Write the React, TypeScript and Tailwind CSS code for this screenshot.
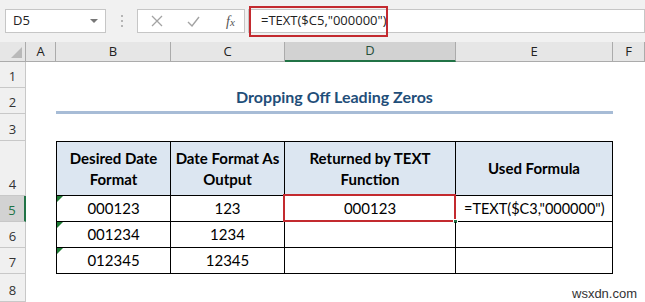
import React from "react";

const colLetters = ["A", "B", "C", "D", "E", "F"];
const rowNums = [1, 2, 3, 4, 5, 6, 7, 8];

const data = [
  { b: "000123", c: "123", d: "000123", e: '=TEXT($C3,"000000")' },
  { b: "001234", c: "1234", d: "", e: "" },
  { b: "012345", c: "12345", d: "", e: "" },
];

const ErrorMark = () => (
  <div className="absolute left-0 top-0 w-0 h-0 border-t-[6px] border-r-[6px] border-t-[#1e7b34] border-r-transparent"></div>
);

const App = () => {
  return (
    <div className="w-[645px] h-[302px] overflow-hidden bg-white relative font-['Lato',sans-serif] text-black">
      {/* formula bar */}
      <div className="h-[42px] bg-[#f1f1f1] flex items-center pl-[5px] font-['Open_Sans',sans-serif]">
        <div className="w-[101px] h-[24px] bg-white border border-[#c6c6c6] flex items-center justify-between pl-[7px] pr-[7px] text-[13px] text-[#222]">
          <span>D5</span>
          <div className="w-0 h-0 border-l-[4px] border-r-[4px] border-t-[4px] border-l-transparent border-r-transparent border-t-[#777]"></div>
        </div>
        <div className="w-[31px] flex flex-col items-center gap-[3px]">
          <div className="w-[2px] h-[2px] bg-[#b5b5b5]"></div>
          <div className="w-[2px] h-[2px] bg-[#b5b5b5]"></div>
          <div className="w-[2px] h-[2px] bg-[#b5b5b5]"></div>
        </div>
        <div className="w-[108px] h-[24px] bg-white border border-[#c6c6c6] flex items-center pl-[12px]">
          <svg width="12" height="12" viewBox="0 0 12 12" className="ml-[1px]">
            <path d="M1 1 L11 11 M11 1 L1 11" stroke="#a3a3a3" strokeWidth="1.3" />
          </svg>
          <svg width="13" height="11" viewBox="0 0 13 11" className="ml-[24px]">
            <path d="M1 6 L5 10 L12 1" stroke="#a3a3a3" strokeWidth="1.4" fill="none" />
          </svg>
          <span className="ml-[26px] font-['Liberation_Serif',serif] italic text-[14px] text-[#555]">
            f<span className="text-[11px]">x</span>
          </span>
        </div>
        <div className="flex-1 h-[24px] bg-white border border-[#c6c6c6] ml-[3px] flex items-center pl-[12px] text-[13px] text-[#222] relative">
          <span>=TEXT($C5,"000000")</span>
          <div className="absolute left-[0px] top-[-4px] w-[139px] h-[31px] border-[2px] border-[#c32a2f]"></div>
        </div>
      </div>

      {/* sheet */}
      <div className="grid grid-cols-[26px_30px_115px_114px_171px_157px_1fr] grid-rows-[20px_26px_26px_27px_55px_26px_26px_26px_1fr] h-[260px]">
        {/* corner */}
        <div className="bg-[#e6e6e6] border-r border-b border-[#ababab] relative">
          <svg className="absolute right-[3px] bottom-[3px]" width="11" height="11" viewBox="0 0 11 11">
            <path d="M11 0 L11 11 L0 11 Z" fill="#b9b9b9" />
          </svg>
        </div>
        {colLetters.map((c) => (
          <div
            key={c}
            className={
              c === "D"
                ? "bg-[#d2d2d2] border-r border-[#ababab] border-b-2 border-b-[#217346] flex items-center justify-center text-[13px] font-['Open_Sans',sans-serif] text-[#26503a]"
                : "bg-[#e6e6e6] border-r border-b border-[#ababab] flex items-center justify-center text-[13px] font-['Open_Sans',sans-serif] text-[#222]"
            }
          >
            {c}
          </div>
        ))}

        {rowNums.map((r) => {
          const header = (
            <div
              key={"h" + r}
              className={
                r === 5
                  ? "bg-[#d2d2d2] border-r-2 border-r-[#217346] border-b border-[#c8c8c8] flex items-end justify-center pb-[1px] text-[13px] font-['Open_Sans',sans-serif] text-[#217346]"
                  : "bg-[#f0f0f0] border-r border-b border-[#c8c8c8] flex items-end justify-center pb-[1px] text-[13px] font-['Open_Sans',sans-serif] text-[#333]"
              }
            >
              {r}
            </div>
          );

          if (r === 2) {
            return (
              <React.Fragment key={r}>
                {header}
                <div></div>
                <div className="col-span-4 border-b-[3px] border-[#a7bcd6] flex items-end justify-center pb-[2px] text-[16px] font-bold text-[#1f4e79]">
                  Dropping Off Leading Zeros
                </div>
                <div></div>
              </React.Fragment>
            );
          }

          if (r === 4) {
            const heads = [
              ["Desired Date", "Format"],
              ["Date Format As", "Output"],
              ["Returned by TEXT", "Function"],
              ["Used Formula"],
            ];
            return (
              <React.Fragment key={r}>
                {header}
                <div></div>
                {heads.map((h, i) => (
                  <div
                    key={i}
                    className={
                      "bg-[#dce6f1] border-t border-r border-b border-black flex flex-col items-center justify-center text-[15px] font-bold leading-[21px] " +
                      (i === 0 ? "border-l" : "")
                    }
                  >
                    {h.map((line) => (
                      <span key={line}>{line}</span>
                    ))}
                  </div>
                ))}
                <div></div>
              </React.Fragment>
            );
          }

          if (r >= 5 && r <= 7) {
            const row = data[r - 5];
            return (
              <React.Fragment key={r}>
                {header}
                <div></div>
                <div className="relative border-l border-r border-b border-black flex items-center justify-center text-[15px]">
                  <ErrorMark />
                  {row.b}
                </div>
                <div className="border-r border-b border-black flex items-center justify-center text-[15px]">
                  {row.c}
                </div>
                <div className="relative border-r border-b border-black flex items-center justify-center text-[15px]">
                  {row.d}
                  {r === 5 && (
                    <>
                      <div className="absolute left-[-2px] top-[-2px] right-[-1px] bottom-[-1px] border-[2px] border-[#c32a2f]"></div>
                      <div className="absolute right-[-3px] bottom-[-3px] w-[5px] h-[5px] bg-[#217346] border border-white"></div>
                    </>
                  )}
                </div>
                <div className="border-r border-b border-black flex items-center pl-[8px] text-[14.5px]">
                  {row.e}
                </div>
                <div></div>
              </React.Fragment>
            );
          }

          return (
            <React.Fragment key={r}>
              {header}
              <div className="col-span-6"></div>
            </React.Fragment>
          );
        })}
        {/* filler row header */}
        <div className="bg-[#f0f0f0] border-r border-[#c8c8c8]"></div>
        <div className="col-span-6"></div>
      </div>

      <div className="absolute left-[572px] top-[284px] font-['Liberation_Sans',sans-serif] text-[13px] text-[#333]">
        wsxdn.com
      </div>
    </div>
  );
};

export default App;
